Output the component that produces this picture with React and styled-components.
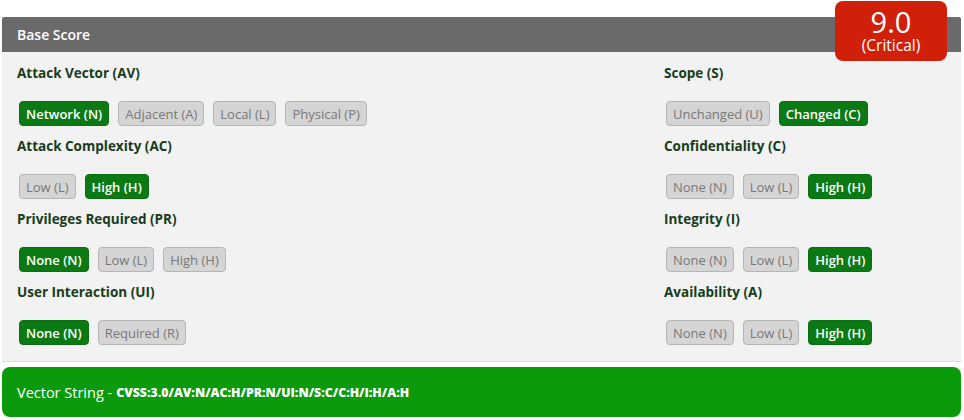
import styled, { createGlobalStyle } from "styled-components";

const Global = createGlobalStyle`
  body {
    margin: 0;
    background: #fff;
    font-family: "Open Sans", "Noto Sans", sans-serif;
  }
`;

const Page = styled.div`
  width: 964px;
  padding: 17px 3px 0 2px;
  box-sizing: border-box;
  position: relative;
`;

const Header = styled.div`
  height: 35px;
  background: #6a6a6a;
  color: #fff;
  font-size: 14px;
  font-weight: 600;
  display: flex;
  align-items: center;
  padding-left: 15px;
  border-radius: 2px 2px 0 0;
`;

const Badge = styled.div`
  position: absolute;
  top: 1px;
  right: 17px;
  width: 112px;
  height: 60px;
  background: #d1200a;
  border-radius: 8px;
  color: #fff;
  display: flex;
  flex-direction: column;
  align-items: center;
  justify-content: center;
`;

const ScoreNum = styled.div`
  font-size: 29px;
  line-height: 30px;
`;

const ScoreLabel = styled.div`
  font-size: 15.5px;
  line-height: 17px;
  margin-bottom: 2px;
`;

const Body = styled.div`
  background: #f2f2f2;
  border-bottom: 1px solid #dedede;
  padding: 12px 15px 5px;
  display: grid;
  grid-template-columns: 647px 1fr;
`;

const Column = styled.div`
  display: flex;
  flex-direction: column;
`;

const Group = styled.div`
  margin-bottom: 11px;
`;

const Title = styled.div`
  color: #163c1b;
  font-size: 13.5px;
  font-weight: 700;
  line-height: 18px;
  margin-bottom: 19px;
`;

const Options = styled.div`
  display: flex;
  gap: 9px;
  padding-left: 2px;
`;

const Option = styled.span`
  height: 25px;
  box-sizing: border-box;
  padding: 0 6px;
  display: inline-flex;
  align-items: center;
  font-size: 13px;
  border-radius: 4px;
  border: 1px solid ${(p) => (p.$on ? "#0a6e12" : "#b5b5b5")};
  background: ${(p) => (p.$on ? "#0b7a14" : "#d5d5d5")};
  color: ${(p) => (p.$on ? "#fff" : "#787878")};
  font-weight: ${(p) => (p.$on ? 600 : 400)};
`;

const VectorBar = styled.div`
  margin-top: 5px;
  height: 50px;
  background: #0a9a0c;
  border-radius: 8px;
  color: #fff;
  display: flex;
  align-items: center;
  padding-left: 15px;
  font-size: 14.5px;
`;

const VectorCode = styled.span`
  font-size: 12.3px;
  font-weight: 800;
  margin-left: 4px;
`;

const left = [
  { title: "Attack Vector (AV)", opts: ["Network (N)", "Adjacent (A)", "Local (L)", "Physical (P)"], on: 0 },
  { title: "Attack Complexity (AC)", opts: ["Low (L)", "High (H)"], on: 1 },
  { title: "Privileges Required (PR)", opts: ["None (N)", "Low (L)", "High (H)"], on: 0 },
  { title: "User Interaction (UI)", opts: ["None (N)", "Required (R)"], on: 0 },
];

const right = [
  { title: "Scope (S)", opts: ["Unchanged (U)", "Changed (C)"], on: 1 },
  { title: "Confidentiality (C)", opts: ["None (N)", "Low (L)", "High (H)"], on: 2 },
  { title: "Integrity (I)", opts: ["None (N)", "Low (L)", "High (H)"], on: 2 },
  { title: "Availability (A)", opts: ["None (N)", "Low (L)", "High (H)"], on: 2 },
];

const Metric = ({ title, opts, on }) => (
  <Group>
    <Title>{title}</Title>
    <Options>
      {opts.map((o, i) => (
        <Option key={o} $on={i === on}>
          {o}
        </Option>
      ))}
    </Options>
  </Group>
);

export default function App() {
  return (
    <Page>
      <Global />
      <Header>Base Score</Header>
      <Badge>
        <ScoreNum>9.0</ScoreNum>
        <ScoreLabel>(Critical)</ScoreLabel>
      </Badge>
      <Body>
        <Column>
          {left.map((m) => (
            <Metric key={m.title} {...m} />
          ))}
        </Column>
        <Column>
          {right.map((m) => (
            <Metric key={m.title} {...m} />
          ))}
        </Column>
      </Body>
      <VectorBar>
        Vector String -
        <VectorCode>CVSS:3.0/AV:N/AC:H/PR:N/UI:N/S:C/C:H/I:H/A:H</VectorCode>
      </VectorBar>
    </Page>
  );
}
